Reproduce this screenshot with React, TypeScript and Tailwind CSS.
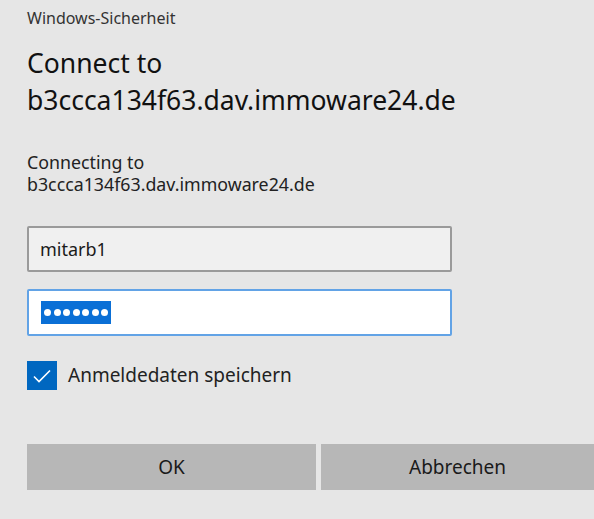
export default function App() {
  return (
    <div className="w-[594px] h-[519px] bg-[#e6e6e6] overflow-hidden text-[#1a1a1a]" style={{ fontFamily: '"Noto Sans", "Open Sans", sans-serif' }}>
      <div className="pl-[27px]">
        <div className="pt-[8px] text-[16px] leading-[20px] text-[#333]">Windows-Sicherheit</div>
        <div className="mt-[17px] text-[26.5px] leading-[37px] text-[#111]">
          <div>Connect to</div>
          <div>b3ccca134f63.dav.immoware24.de</div>
        </div>
        <div className="mt-[32px] text-[17.8px] leading-[22px] text-[#222]">
          <div>Connecting to</div>
          <div>b3ccca134f63.dav.immoware24.de</div>
        </div>
        <div className="mt-[31px] w-[425px] h-[46px] border-2 border-[#9a9a9a] bg-[#f0f0f0] rounded-[2px] flex items-center px-[11px] text-[18px]">
          mitarb1
        </div>
        <div className="mt-[17px] w-[425px] h-[47px] border-2 border-[#62a3e6] bg-white rounded-[2px] flex items-center px-[12px]">
          <span className="bg-[#0a6fd6] h-[23px] w-[70px] flex items-center justify-between px-[3px]">
            {Array.from({ length: 7 }).map((_, i) => (
              <span key={i} className="w-[7px] h-[7px] rounded-full bg-white" />
            ))}
          </span>
        </div>
        <div className="mt-[25px] flex items-center gap-[11px]">
          <div className="w-[30px] h-[29px] bg-[#0067c0] flex items-center justify-center">
            <svg width="20" height="16" viewBox="0 0 20 16" fill="none">
              <path d="M2 8.5 L7 13.5 L18 2.5" stroke="white" strokeWidth="1.6" />
            </svg>
          </div>
          <span className="text-[19px] text-[#222]">Anmeldedaten speichern</span>
        </div>
      </div>
      <div className="mt-[54px] pl-[27px] flex gap-[5px]">
        <button className="w-[289px] h-[46px] bg-[#b7b7b7] text-[19px] text-[#1a1a1a]">OK</button>
        <button className="flex-1 h-[46px] bg-[#b7b7b7] text-[19px] text-[#1a1a1a]">Abbrechen</button>
      </div>
    </div>
  );
}
